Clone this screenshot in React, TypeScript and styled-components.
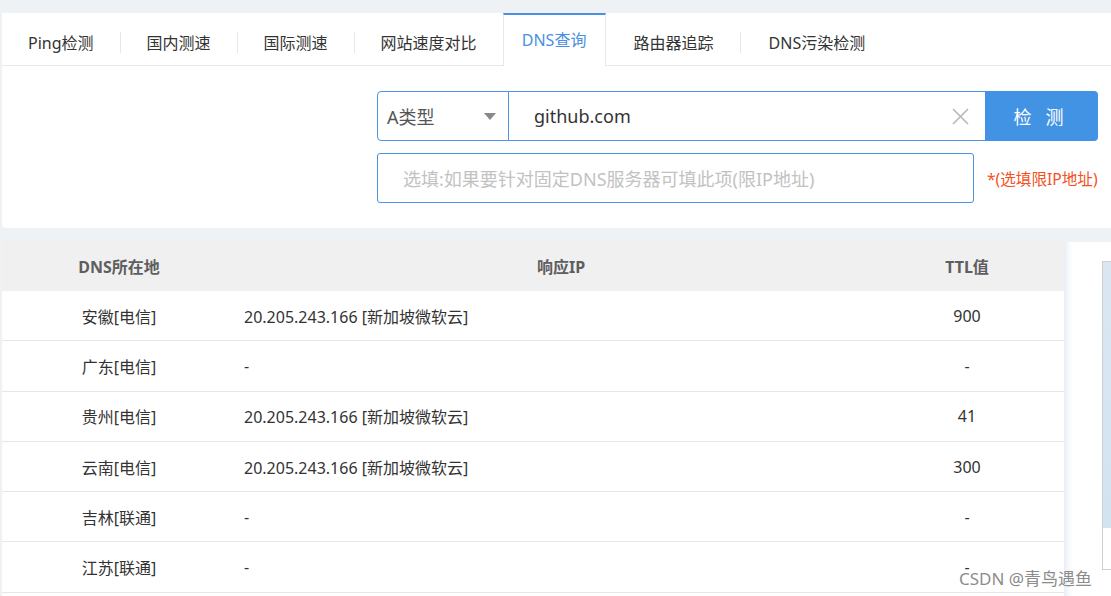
import React from "react";
import styled, { createGlobalStyle } from "styled-components";

const GlobalStyle = createGlobalStyle`
  html, body {
    margin: 0;
    padding: 0;
    background: #eff2f5;
    font-family: "Noto Sans", "Noto Sans CJK SC", sans-serif;
    overflow: hidden;
  }
  * { box-sizing: border-box; }
`;

const Page = styled.div`
  width: 1111px;
  height: 596px;
  padding: 13px 0 0 2px;
  position: relative;
  overflow: hidden;
`;

const Card = styled.div`
  background: #fff;
  border-radius: 4px 0 0 4px;
  margin-right: -20px;
`;

const TabBar = styled.div`
  display: flex;
  height: 53px;
  border-bottom: 1px solid #e8e8e8;
`;

const Tab = styled.div<{ $active?: boolean; $pl?: number }>`
  display: flex;
  align-items: center;
  justify-content: ${(p) => (p.$active ? "center" : "flex-start")};
  font-size: 16px;
  color: ${(p) => (p.$active ? "#4a90e2" : "#333")};
  padding: ${(p) => (p.$active ? "0 0 3px" : `5px 26px 0 ${p.$pl ?? 26}px`)};
  width: ${(p) => (p.$active ? "103px" : "auto")};
  border-top: ${(p) => (p.$active ? "2px solid #4a90e2" : "none")};
  border-left: ${(p) => (p.$active ? "1px solid #e8e8e8" : "none")};
  border-right: ${(p) => (p.$active ? "1px solid #e8e8e8" : "none")};
  background: #fff;
  margin-bottom: ${(p) => (p.$active ? "-1px" : "0")};
  white-space: nowrap;
`;

const Divider = styled.div`
  width: 1px;
  height: 21px;
  background: #e6e6e6;
  align-self: center;
  margin-top: 6px;
`;

const Form = styled.div`
  padding: 25px 0 25px 375px;
  display: flex;
  flex-direction: column;
  gap: 12px;
`;

const FormRow = styled.div`
  display: flex;
  align-items: center;
`;

const Select = styled.div`
  width: 132px;
  height: 50px;
  border: 1px solid #4a94e6;
  border-radius: 4px 0 0 4px;
  display: flex;
  align-items: center;
  justify-content: space-between;
  padding: 0 12px 0 9px;
  font-size: 18px;
  color: #555;
`;

const Caret = styled.span`
  width: 0;
  height: 0;
  border-left: 6px solid transparent;
  border-right: 6px solid transparent;
  border-top: 7px solid #888;
`;

const DomainBox = styled.div`
  width: 476px;
  height: 50px;
  border-top: 1px solid #4a94e6;
  border-bottom: 1px solid #4a94e6;
  display: flex;
  align-items: center;
  justify-content: space-between;
  padding: 0 16px 0 25px;
  font-size: 18px;
  color: #333;
`;

const ClearIcon = styled.svg`
  width: 17px;
  height: 17px;
`;

const SubmitButton = styled.button`
  width: 113px;
  height: 50px;
  border: none;
  background: #4393e4;
  color: #fff;
  border-radius: 0 4px 4px 0;
  font-family: inherit;
  font-size: 18px;
  letter-spacing: 14px;
  padding-left: 14px;
`;

const ServerInput = styled.div`
  width: 597px;
  height: 50px;
  border: 1px solid #4a94e6;
  border-radius: 3px;
  display: flex;
  align-items: center;
  padding-left: 25px;
  font-size: 18px;
  color: #c2c2c2;
  white-space: nowrap;
`;

const Note = styled.span`
  margin-left: 13px;
  font-size: 15.6px;
  color: #f4511e;
  white-space: nowrap;
`;

const Bottom = styled.div`
  display: flex;
  margin-top: 12px;
  height: 400px;
`;

const Table = styled.div`
  width: 1062px;
  background: #fff;
  flex-shrink: 0;
`;

const Row = styled.div<{ $head?: boolean }>`
  display: grid;
  grid-template-columns: 234px 634px 1fr;
  height: ${(p) => (p.$head ? "51px" : "50.3px")};
  background: ${(p) => (p.$head ? "#f0f0f0" : "#fff")};
  border-bottom: ${(p) => (p.$head ? "none" : "1px solid #e6e6e6")};
  font-size: 16px;
  font-weight: ${(p) => (p.$head ? 700 : 400)};
  color: ${(p) => (p.$head ? "#5e5e5e" : "#333")};
`;

const Cell = styled.div<{ $align?: "left" | "center"; $pl?: number }>`
  display: flex;
  align-items: center;
  justify-content: ${(p) => (p.$align === "left" ? "flex-start" : "center")};
  padding-left: ${(p) => p.$pl ?? 0}px;
  white-space: nowrap;
`;

const Side = styled.div`
  flex: 1;
  margin-top: 2px;
  background: #fff;
  box-shadow: inset 10px 0 8px -8px rgba(200, 215, 235, 0.6);
  padding: 19px 0 0 38px;
`;

const SideBox = styled.div`
  width: 40px;
  height: 309px;
  border: 1px solid #cfcfcf;
  border-right: none;
  display: flex;
  flex-direction: column;
`;

const SideBoxTop = styled.div`
  height: 266px;
  background: linear-gradient(180deg, #dae7f3, #d3e4f1);
`;

const Watermark = styled.div`
  position: absolute;
  left: 959px;
  top: 565px;
  font-size: 17px;
  color: #8c8c8c;
  text-shadow: 0 0 2px #fff;
  white-space: nowrap;
`;

const rows = [
  { loc: "安徽[电信]", ip: "20.205.243.166 [新加坡微软云]", ttl: "900" },
  { loc: "广东[电信]", ip: "-", ttl: "-" },
  { loc: "贵州[电信]", ip: "20.205.243.166 [新加坡微软云]", ttl: "41" },
  { loc: "云南[电信]", ip: "20.205.243.166 [新加坡微软云]", ttl: "300" },
  { loc: "吉林[联通]", ip: "-", ttl: "-" },
  { loc: "江苏[联通]", ip: "-", ttl: "-" },
];

const App: React.FC = () => {
  return (
    <Page>
      <GlobalStyle />
      <Card>
        <TabBar>
          <Tab>Ping检测</Tab>
          <Divider />
          <Tab>国内测速</Tab>
          <Divider />
          <Tab>国际测速</Tab>
          <Divider />
          <Tab>网站速度对比</Tab>
          <Tab $active>DNS查询</Tab>
          <Tab $pl={28}>路由器追踪</Tab>
          <Divider />
          <Tab $pl={28}>DNS污染检测</Tab>
        </TabBar>
        <Form>
          <FormRow>
            <Select>
              A类型
              <Caret />
            </Select>
            <DomainBox>
              github.com
              <ClearIcon viewBox="0 0 17 17">
                <path d="M1 1L16 16M16 1L1 16" stroke="#b8b8b8" strokeWidth="1.6" fill="none" />
              </ClearIcon>
            </DomainBox>
            <SubmitButton>检测</SubmitButton>
          </FormRow>
          <FormRow>
            <ServerInput>选填:如果要针对固定DNS服务器可填此项(限IP地址)</ServerInput>
            <Note>*(选填限IP地址)</Note>
          </FormRow>
        </Form>
      </Card>
      <Bottom>
        <Table>
          <Row $head>
            <Cell>DNS所在地</Cell>
            <Cell $pl={16}>响应IP</Cell>
            <Cell>TTL值</Cell>
          </Row>
          {rows.map((r) => (
            <Row key={r.loc}>
              <Cell>{r.loc}</Cell>
              <Cell $align="left" $pl={8}>
                {r.ip}
              </Cell>
              <Cell>{r.ttl}</Cell>
            </Row>
          ))}
        </Table>
        <Side>
          <SideBox>
            <SideBoxTop />
          </SideBox>
        </Side>
      </Bottom>
      <Watermark>CSDN @青鸟遇鱼</Watermark>
    </Page>
  );
};

export default App;
